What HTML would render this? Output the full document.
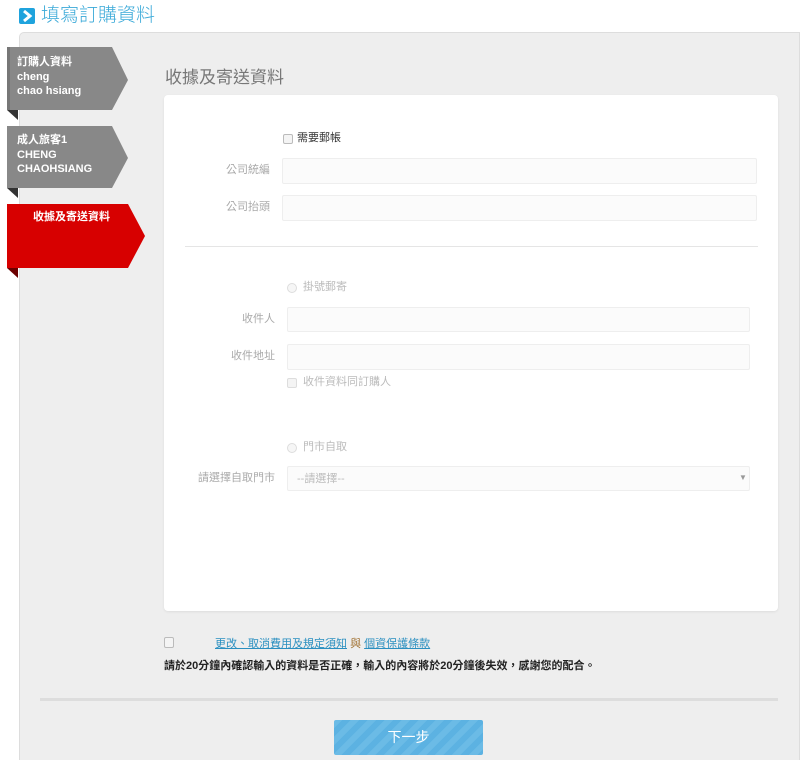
<!DOCTYPE html>
<html><head><meta charset="utf-8"><style>
*{margin:0;padding:0;box-sizing:border-box}
html,body{width:800px;height:760px;overflow:hidden}
body{background:#fff;font-family:"Liberation Sans","Noto Sans CJK TC",sans-serif;position:relative}
.a{position:absolute;line-height:1.2}
.lbl{position:absolute;font-size:11px;color:#aaa;text-align:right;width:80px;line-height:1.2}
.inp{position:absolute;background:#fbfbfb;border:1px solid #eee;border-radius:2px}
.cb{position:absolute;width:10px;height:10px;border:1px solid #bbb;border-radius:2px;background:#f4f4f4}
.rd{position:absolute;width:10px;height:10px;border:1px solid #ddd;border-radius:50%;background:#f6f6f6}
.t{position:absolute;font-size:11px;color:#bbb;line-height:1.2}
</style></head><body>
<div class="a" style="left:19px;top:8px;width:16px;height:16px;background:#1fa3dd;border-radius:2px"></div>
<svg class="a" style="left:19px;top:8px" width="16" height="16"><path d="M5 3 L11 8 L5 13" stroke="#fff" stroke-width="3" fill="none"/></svg>
<div class="a" style="left:41px;top:5px;font-size:19px;color:#3aa9d8;font-weight:300">填寫訂購資料</div>
<div class="a" style="left:19px;top:32px;width:781px;height:740px;background:#eee;border:1px solid #ddd;border-radius:5px 0 0 0"></div>
<svg class="a" style="left:0;top:40px" width="160" height="240">
<polygon points="7,70 18,70 18,80 " fill="#333"/>
<polygon points="7,7 112,7 128,40 112,70 7,70 7,80 " fill="#888"/>
<polygon points="7,7 10,7 10,70 7,70" fill="#777"/>
<polygon points="7,148 18,148 18,158" fill="#333"/>
<polygon points="7,86 112,86 128,118 112,148 7,148" fill="#888"/>
<polygon points="7,228 18,228 18,238" fill="#6b0000"/>
<polygon points="7,164 128,164 145,196 128,228 7,228" fill="#d70000"/>
</svg>
<div class="a" style="left:17px;top:55px;font-size:11px;line-height:14.5px;color:#fff;font-weight:bold">訂購人資料<br>cheng<br>chao hsiang</div>
<div class="a" style="left:17px;top:133px;font-size:11px;line-height:14.5px;color:#fff;font-weight:bold">成人旅客1<br>CHENG<br>CHAOHSIANG</div>
<div class="a" style="left:33px;top:211px;font-size:11px;color:#fff;font-weight:bold">收據及寄送資料</div>
<div class="a" style="left:165px;top:68px;font-size:17px;color:#777">收據及寄送資料</div>
<div class="a" style="left:164px;top:95px;width:614px;height:516px;background:#fff;border-radius:4px;box-shadow:0 1px 2px #ddd"></div>
<div class="cb" style="left:283px;top:134px"></div>
<div class="a" style="left:297px;top:132px;font-size:11px;color:#333">需要郵帳</div>
<div class="lbl" style="left:190px;top:164px">公司統編</div>
<div class="inp" style="left:282px;top:158px;width:475px;height:26px"></div>
<div class="lbl" style="left:190px;top:201px">公司抬頭</div>
<div class="inp" style="left:282px;top:195px;width:475px;height:26px"></div>
<div class="a" style="left:185px;top:246px;width:573px;height:1px;background:#e5e5e5"></div>
<div class="rd" style="left:287px;top:283px"></div><div class="t" style="left:303px;top:281px">掛號郵寄</div>
<div class="lbl" style="left:195px;top:313px">收件人</div>
<div class="inp" style="left:287px;top:307px;width:463px;height:25px"></div>
<div class="lbl" style="left:195px;top:350px">收件地址</div>
<div class="inp" style="left:287px;top:344px;width:463px;height:26px"></div>
<div class="cb" style="left:287px;top:378px;border-color:#ddd"></div><div class="t" style="left:303px;top:376px">收件資料同訂購人</div>
<div class="rd" style="left:287px;top:443px"></div><div class="t" style="left:303px;top:441px">門市自取</div>
<div class="lbl" style="left:175px;top:472px;width:100px">請選擇自取門市</div>
<div class="inp" style="left:287px;top:466px;width:463px;height:25px"></div>
<div class="t" style="left:297px;top:473px;color:#bbb">--請選擇--</div>
<div class="t" style="left:739px;top:473px;font-size:8px;color:#999">▼</div>
<div class="cb" style="left:164px;top:637px;width:10px;height:11px"></div>
<div class="a" style="left:215px;top:638px;font-size:11px;color:#2a8fc0"><u>更改、取消費用及規定須知</u> <span style="color:#a07030">與</span> <u>個資保護條款</u></div>
<div class="a" style="left:164px;top:660px;font-size:11px;color:#222;font-weight:bold">請於20分鐘內確認輸入的資料是否正確，輸入的內容將於20分鐘後失效，感謝您的配合。</div>
<div class="a" style="left:40px;top:698px;width:738px;height:3px;background:#ddd"></div>
<div class="a" style="left:334px;top:720px;width:149px;height:35px;background:repeating-linear-gradient(135deg,#6bbbe6 0 6px,#5cb2e2 6px 12px);border-radius:2px;color:#fff;font-size:14px;text-align:center;line-height:35px">下一步</div>
</body></html>
